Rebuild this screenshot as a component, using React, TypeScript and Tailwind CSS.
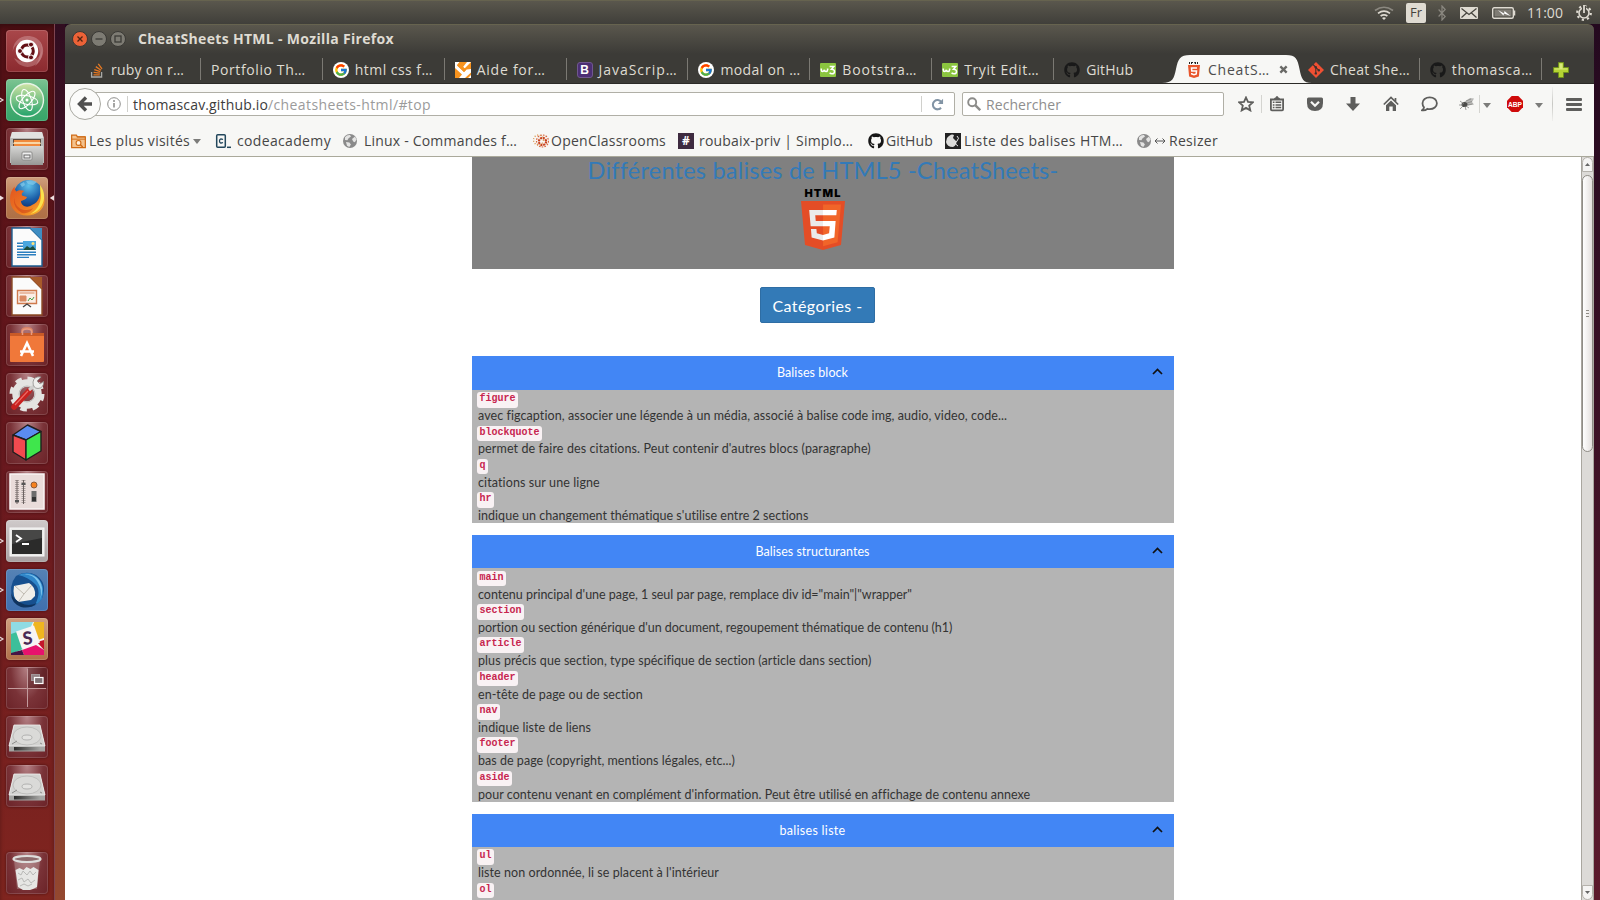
import React, { useLayoutEffect, useRef, useState } from "react";
import { FaGithub, FaUbuntu } from "react-icons/fa";
import { FcGoogle } from "react-icons/fc";

const UI = "font-['Open_Sans','Noto_Sans',sans-serif]";
const PAGE = "font-['Lato',sans-serif]";

/* Text spread by letter spacing over a given width. */
function Fit({ w, children, className = "" }: { w: number; children: string; className?: string }) {
  const ref = useRef<HTMLSpanElement>(null);
  const [ls, setLs] = useState(0);
  useLayoutEffect(() => {
    if (!ref.current) return;
    const natural = ref.current.getBoundingClientRect().width;
    setLs((w - natural) / children.length);
  }, [w, children]);
  return (
    <span ref={ref} className={"inline-block shrink-0 whitespace-pre " + className} style={{ letterSpacing: ls }}>
      {children}
    </span>
  );
}

/* ---------- small icons ---------- */

function Html5({ className = "" }: { className?: string }) {
  return (
    <svg viewBox="30 0 451 512" preserveAspectRatio="none" className={className}>
      <path fill="#e44d26" d="M71 460 30 0h451l-41 460-185 52z" />
      <path fill="#f16529" d="m256 472 149-41 35-394H256z" />
      <path fill="#ebebeb" d="M256 208h-75l-5-58h80V94H114l15 171h127zm0 147-64-17-4-45h-56l7 89 117 32z" />
      <path fill="#fff" d="M255 208v57h70l-7 73-63 17v59l117-32 13-174zm0-114v56h137l5-56z" />
    </svg>
  );
}

function StackOverflow() {
  return (
    <svg viewBox="0 0 16 16" className="size-4" fill="none">
      <path d="M2.600 10v5h10V10" stroke="#a9a9a6" strokeWidth="1.300" />
      <path d="M4.500 12.800h6.300M4.600 10.300l6.300.8M5.300 7.600l6 2M6.800 4.600l5.300 3.600M9.300 1.800l3.700 5" stroke="#e87922" strokeWidth="1.300" />
    </svg>
  );
}

function Google() {
  return (
    <span className="flex size-4 items-center justify-center rounded-full bg-white">
      <FcGoogle size={14} />
    </span>
  );
}

function Zeste() {
  return (
    <svg viewBox="0 0 16 16" className="size-4">
      <path fill="#f7931e" d="M0 0h16v16H0z" />
      <path fill="#fff" d="M0 0h4.500L2 3.500 9 10l2.500-2.500L16 7v3.500L10 16H4l3-3.500L0 6z" />
      <path fill="#fff" d="M13 16h3v-3zM12 0h4L9.500 6.500 8 5z" />
      <path fill="#f7931e" d="m2 3 3-3h4L8 5l3.500 2.500L9 10z" />
    </svg>
  );
}

function BootB() {
  return (
    <span className="flex size-4 items-center justify-center rounded-[3px] border border-[#70578f] bg-[#4c2f74] font-['Liberation_Sans',sans-serif] text-[12px] leading-none font-bold text-white">
      B
    </span>
  );
}

function W3() {
  return (
    <svg viewBox="0 0 16 16" className="size-4">
      <rect y="1" width="16" height="14" rx="1" fill="#8bc53f" />
      <path d="M1.300 6.500v1.200q0 1.800 1.400 1.800t1.700-1.800q.1 1.800 1.600 1.800t1.700-2l-.1-1" fill="none" stroke="#fff" strokeWidth="1.600" />
      <path d="M9.600 4.600h4.200l-2.300 2.700q3-.1 3 2.100 0 2.400-2.500 2.400-1.600 0-2.400-1" fill="none" stroke="#fff" strokeWidth="1.500" />
    </svg>
  );
}

function TabHtml() {
  return (
    <svg viewBox="0 0 16 16" className="size-4">
      <path d="M3 0h1v2H3zM5 0h2v1H6v1H5zM8 0h2v2H9zM11 0h1v2h-1z" fill="#222" />
      <path d="M2 3h12l-1.100 11.500L8 16l-4.900-1.500z" fill="#e8562c" />
      <path d="M11 6H5.500l.3 3h4.700l-.3 3L8 12.800 5.800 12l-.1-1" fill="none" stroke="#fff" strokeWidth="1.500" />
    </svg>
  );
}

function Git() {
  return (
    <svg viewBox="0 0 16 16" className="size-4">
      <path d="m8 0 8 8-8 8-8-8z" fill="#f05033" />
      <path d="M5 2.500 7.800 5.300v6.200M7.800 5.300l2.800 2.800" stroke="#40302c" strokeWidth="1.100" fill="none" />
      <circle cx="7.800" cy="5.300" r="1.200" fill="#40302c" />
      <circle cx="7.800" cy="11.400" r="1.200" fill="#40302c" />
      <circle cx="10.800" cy="8.200" r="1.200" fill="#40302c" />
    </svg>
  );
}

function Globe() {
  return (
    <svg viewBox="0 0 16 16" className="size-4 shrink-0">
      <circle cx="8" cy="8" r="7" fill="#8a8a8a" />
      <path d="M3 4.200Q5 1.700 8 2l1 1.600-2.400 1.700-1.200 2L3 7zM10 6l3-2.400 1.500 3-1.600 2.600-1.700-.7zM4 9l3.400.4 1.500 2L7.300 14 5 12.800z" fill="#e4e4e3" />
    </svg>
  );
}

function Caret() {
  return (
    <svg viewBox="0 0 8 5" className="h-[5px] w-2 shrink-0">
      <path d="M0 0h8L4 5z" fill="#7c7c7a" />
    </svg>
  );
}

/* ---------- top panel ---------- */

function TopPanel() {
  return (
    <header className="flex h-6 w-full shrink-0 items-center justify-end border-t border-[#66634f] bg-linear-to-b from-[#5a574d] to-[#403f3a] pr-2 text-[#dfdbd2]">
      <svg viewBox="0 0 20 14" className="mr-3 h-[14px] w-5" fill="none" strokeWidth="1.700">
        <path d="M1 4.500q9-6.500 18 0" stroke="#8b8880" />
        <path d="M4 7.400q6-4.400 12 0M6.600 10q3.400-2.400 6.800 0" stroke="#dfdbd2" />
        <path d="m8 12 2 2 2-2q-2-1.500-4 0" fill="#dfdbd2" />
      </svg>
      <span className="mr-3 flex h-5 w-5 items-center justify-center rounded-[2px] bg-[#dfdbd2] text-[13px] leading-none text-[#45433d]">
        Fr
      </span>
      <svg viewBox="0 0 8 16" className="mr-[14px] h-4 w-2" fill="none" stroke="#8b8880" strokeWidth="1.200">
        <path d="m.6 4.500 6.600 7L4 15V1l3.200 3.500-6.600 7" />
      </svg>
      <svg viewBox="0 0 18 12" className="mr-[14px] h-3 w-[18px]">
        <rect width="18" height="12" rx="1" fill="#dfdbd2" />
        <path d="m1.500 1.500 7.500 6 7.500-6M1.500 10.500l5-4.500m10 4.500L11.500 6" fill="none" stroke="#45433d" strokeWidth="1.200" />
      </svg>
      <svg viewBox="0 0 24 12" className="mr-[11px] h-3 w-6">
        <rect x=".7" y=".7" width="20.600" height="10.600" rx="1.500" fill="none" stroke="#dfdbd2" strokeWidth="1.400" />
        <rect x="2.500" y="2.500" width="17" height="7" fill="#7f7c74" />
        <path d="m6 3 6 3.500.5-2.500 6 5-6.500-2.500-.5 2z" fill="#fff" />
        <path d="M22.500 3.500v5" stroke="#dfdbd2" strokeWidth="1.500" />
      </svg>
      <Fit w={36} className="mr-[13px] text-[14px]">11:00</Fit>
      <svg viewBox="0 0 16 16" className="size-4">
        <circle cx="8" cy="8" r="6.800" fill="none" stroke="#dfdbd2" strokeWidth="2.200" strokeDasharray="2.200 3.140" />
        <circle cx="8" cy="8" r="5" fill="none" stroke="#dfdbd2" strokeWidth="1.600" />
        <path d="M8 1v7" stroke="#4b4942" strokeWidth="4" />
        <path d="M8 0v8" stroke="#dfdbd2" strokeWidth="1.800" />
      </svg>
    </header>
  );
}

/* ---------- launcher ---------- */

type Tile = { bg: string; icon: React.ReactNode; left?: "open" | "full"; right?: boolean };

const glass = "bg-radial-[at_50%_0%] from-[#b58286] from-0% via-[#7a3338] via-55% to-[#6a2227] to-100%";

const disk = (
  <>
    <path d="M8 9h26l5 21v5H3v-5z" fill="#d9d9d7" />
    <path d="M3 30h36v5.500H3z" fill="#a5a5a3" />
    <path d="M8 31h26v3.500H8z" fill="url(#slot)" />
    <path d="M8 9h26l5 21H3z" fill="#d3d3d1" stroke="#f0f0ef" strokeWidth=".8" />
    <ellipse cx="21" cy="20" rx="14" ry="9" fill="#dadad8" stroke="#bfbfbd" />
    <ellipse cx="21" cy="21.500" rx="5" ry="2.500" fill="#e2e2e0" stroke="#a5a5a3" strokeWidth=".8" />
    <path d="m6 28 5-3M36 28l-2-1" stroke="#8d8d8b" strokeWidth="1" />
  </>
);

const tiles: Tile[] = [
  {
    bg: "bg-linear-to-b from-[#a9474a] to-[#8b2a2f]",
    icon: (
      <>
        <path d="M7 24C5 10 18 2 30 8c10 6 8 22-1 28 12-16-1-27-10-25S6 18 7 24" fill="#c98b8d" opacity=".6" />
        <path d="M8 28c6 12 22 12 28-1 3-8 0-14-4-18 12 16-8 30-24 19" fill="#c98b8d" opacity=".5" />
        <circle cx="21" cy="21" r="11.200" fill="#fff" />
        <FaUbuntu x={10.5} y={10.5} size={21} color="#fff" />
        <circle cx="21.300" cy="21" r="6" fill="none" stroke="#641016" strokeWidth="3" strokeDasharray="10.600 2" strokeDashoffset="5" />
        <g fill="#641016" stroke="#fff">
          <circle cx="14" cy="21" r="2.500" />
          <circle cx="25" cy="14.600" r="2.500" />
          <circle cx="25" cy="27.400" r="2.500" />
        </g>
      </>
    ),
  },
  {
    bg: "bg-linear-to-b from-[#7cc493] via-[#4cae74] to-[#36a569]",
    left: "open",
    icon: (
      <>
        <circle cx="21" cy="21" r="16.500" fill="url(#atom)" stroke="#e6f4e6" strokeWidth="1.400" />
        <g fill="none" stroke="#fff" strokeWidth="1.100">
          <ellipse cx="21" cy="21" rx="11" ry="4.300" transform="rotate(12 21 21)" />
          <ellipse cx="21" cy="21" rx="11" ry="4.300" transform="rotate(72 21 21)" />
          <ellipse cx="21" cy="21" rx="11" ry="4.300" transform="rotate(132 21 21)" />
        </g>
        <circle cx="21" cy="21" r="1.500" fill="#fff" />
      </>
    ),
  },
  {
    bg: glass,
    icon: (
      <>
        <path d="M6 4h30l2 6v25H4V10z" fill="#b9b9b7" />
        <path d="M6 4h30l1.500 6h-33z" fill="#e2e2e0" />
        <path d="M7 11h28v8H7z" fill="#5c4a3d" />
        <path d="M8 12h26v6H8z" fill="#f08a3c" />
        <path d="M8 14h26l1 2H7z" fill="#f9d6a5" />
        <path d="M5 18h32v19H5z" fill="url(#steel)" />
        <rect x="16" y="24" width="10" height="8" rx="1" fill="#eee" stroke="#8a8a88" />
        <rect x="18" y="27" width="6" height="3" fill="none" stroke="#666" />
      </>
    ),
  },
  {
    bg: "bg-linear-to-b from-[#cf9f7d] via-[#ba7a50] to-[#ad6f45]",
    left: "full",
    right: true,
    icon: (
      <>
        <circle cx="22.500" cy="17.500" r="14.500" fill="url(#globe)" />
        <path d="M20 4q6-2 11 1l-4 3-5-1zM14 7l4-2 1 3-3 2z" fill="#8fd3f0" opacity=".6" />
        <path d="M21 38.500C10 38.500 4 31 4 21.500c0-5 2-9 4.500-12 0 3 1 4 2 5 2-1.500 5-1.500 8-.5-2 1-3.500 2.500-2.500 4.500l5 1.500c-1 3-4 3-6 4 0 5 6 7.500 11 4 7-2.500 9-10 8-17 4 6 5 10 4.500 14-1 8-8 13.500-17.500 13.500" fill="url(#fox)" />
        <path d="M34 8c5 6 5.500 15 1.500 21-3 5-7 7-11 8 8-5 11.500-13 10-22-.2-3-.5-5-.5-7" fill="#fbe14b" />
        <path d="M8 21q1 10 10 12 6 0 9-2-3 6-11 5Q7 31 8 21" fill="#c93c17" opacity=".5" />
      </>
    ),
  },
  {
    bg: glass,
    icon: (
      <>
        <path d="M6 2h18l12 12v26H6z" fill="#fbfbfb" stroke="#1c5f92" strokeWidth="1.400" />
        <path d="M24 2h12v12z" fill="#3f8dc2" />
        <path d="M11 16.500h10v1.400H11zm0 3h7v1.400h-7zm0 3h7v1.400h-7zm0 3h19v1.400H11zm0 2.600h19v1.400H11zm0 2.600h12v1.400H11z" fill="#2b7fc0" />
        <path d="M17 15h13v9H17z" fill="#49a6df" />
        <path d="m17 24 4-4 3 2 3-2 3 4z" fill="#1d4e3c" />
        <circle cx="27" cy="17.500" r="1.500" fill="#ffe27a" />
      </>
    ),
  },
  {
    bg: glass,
    icon: (
      <>
        <path d="M6 2h18l12 12v26H6z" fill="#fbfbfb" stroke="#8b4a25" strokeWidth="1.400" />
        <path d="M24 2h12v12z" fill="#a75a2a" />
        <path d="M11.500 15.500h19v13h-19z" fill="#fbeee6" stroke="#cf7a4d" strokeWidth="1.400" />
        <path d="M13.500 18h15M14 21h6v5h-6z" fill="#d98a63" stroke="#d98a63" strokeWidth="1" />
        <path d="m22 26 2-3 2 2 2-3" stroke="#4aa04a" fill="none" />
        <path d="m17 32 4-3 4 3" stroke="#444" fill="none" strokeWidth="1.400" />
      </>
    ),
  },
  {
    bg: glass,
    icon: (
      <>
        <path d="M16 13V7q0-3 5-3t5 3v6" fill="none" stroke="#d98365" strokeWidth="2" />
        <path d="M4 9h34v6H4z" fill="#c95a27" />
        <path d="M4 12h34v25q0 1-1 1H5q-1 0-1-1z" fill="#f0783a" />
        <path d="M16.500 11V7.500q0-2.500 4.500-2.500t4.500 2.500V11" fill="none" stroke="#e89a80" strokeWidth="1.500" />
        <path d="m15 32 6-13 6 13M14 27.500h14" stroke="#fff" strokeWidth="2.600" fill="none" />
      </>
    ),
  },
  {
    bg: glass,
    icon: (
      <>
        <circle cx="21" cy="21" r="11" fill="none" stroke="#e4e4e2" strokeWidth="7.500" />
        <circle cx="21" cy="21" r="15.500" fill="none" stroke="#e4e4e2" strokeWidth="4" strokeDasharray="6.500 5.670" />
        <circle cx="21" cy="21" r="8" fill="none" stroke="#bdbdbb" strokeWidth="1" />
        <path d="M8 34 23 18" stroke="#c8211f" strokeWidth="5.500" strokeLinecap="round" />
        <path d="m9 32 13-14" stroke="#ec6a64" strokeWidth="1.200" />
        <path d="m23 17 6-5" stroke="#cfcfcd" strokeWidth="3" />
        <path d="M27 9q1-6 8-5l-4 4 3 3 3.500-2.500q.5 6.500-5.500 7-5 0-5-6.500" fill="#efefed" stroke="#8f8f8d" strokeWidth=".8" />
      </>
    ),
  },
  {
    bg: glass,
    icon: (
      <g stroke="#1e1e1e" strokeWidth="1.400" strokeLinejoin="round">
        <path d="m7 13 14.500-10L35 9.500 20 18z" fill="#5b8cf0" />
        <path d="m7 13 13 5v20L7 30z" fill="#f24a4f" />
        <path d="m20 18 15-8.500V29l-15 9z" fill="#3fe64c" />
      </g>
    ),
  },
  {
    bg: glass,
    icon: (
      <>
        <rect x="4" y="3" width="34" height="35" fill="#e9dcda" stroke="#f9f4f3" strokeWidth="1.500" />
        <path d="M11 9v24M17.500 9v24" stroke="#aaa09e" strokeWidth="4" strokeDasharray="1 1" />
        <path d="M11 9v24M17.500 9v24" stroke="#6e6463" strokeWidth="1" />
        <path d="M9 29h4v2H9zM15.500 12h4v2h-4z" fill="#555" />
        <circle cx="28" cy="14" r="3" fill="#f58220" stroke="#8b5a3a" />
        <rect x="25.500" y="20" width="5" height="11" fill="#6c6c6c" />
        <path d="M26 26h4v4h-4z" fill="#333" />
      </>
    ),
  },
  {
    bg: "bg-linear-to-b from-[#cfcaca] to-[#a9a2a3]",
    left: "open",
    icon: (
      <>
        <rect x="4" y="8" width="34" height="28" fill="#e9e9e7" stroke="#f8f8f8" />
        <rect x="6" y="10" width="30" height="24" fill="#2b2b2a" />
        <path d="M6 10h30v8L6 24z" fill="#474746" />
        <path d="m10 15 5 3.500-5 3.500M16 24h7" stroke="#fff" strokeWidth="1.800" fill="none" />
      </>
    ),
  },
  {
    bg: "bg-linear-to-b from-[#5582b5] to-[#3f6fae]",
    left: "open",
    icon: (
      <>
        <path d="M10 7Q20 1 30 6q9 6 8 16-1 12-13 16-12 1-18-8Q2 17 10 7" fill="#17508f" />
        <path d="M12 6q12-5 20 3 8 8 4 21-4 5-7 6 7-14 0-21T12 6" fill="#2f86c9" />
        <path d="M14 6q12-2 17 6 6 9 3 19 5-12-1-20T14 6" fill="#7cc4ee" />
        <path d="m8 17 15-3q7 4 6 13l-4 4-13 2q-6-5-4-16" fill="#f0eee9" />
        <path d="m9 17 9 8 8-9M13 32l5-7" stroke="#c0bbb1" fill="none" />
        <path d="M5 24q0 10 10 14 10 2 16-4-9 4-16 0-8-4-10-10" fill="#10345f" />
      </>
    ),
  },
  {
    bg: "bg-linear-to-b from-[#cf9f7f] to-[#b0714a]",
    left: "open",
    icon: (
      <>
        <path d="M5 4h33v33H5z" fill="#f7f4f2" />
        <path d="M5 4h22l-3 7-19 6z" fill="#8fdbe3" />
        <path d="M5 16 11 14l6 17-12 5z" fill="#3cbf9a" />
        <path d="M28 4h10v16l-6 2-5-15z" fill="#efb51f" />
        <path d="m31 24 7-2v10z" fill="#c4162a" />
        <path d="m16 32 14-5 8 5v5H18z" fill="#e7126d" />
        <path d="m5 35 11-3 2 5H5z" fill="#461445" />
        <path d="m10 13.500 18-6 6 17-18 6.500z" fill="#f7f4f2" />
        <text x="21.500" y="26.500" textAnchor="middle" fontSize="18" fontWeight="900" fill="#4a2a55" fontFamily="Lato, sans-serif" transform="rotate(-6 21.500 20)">S</text>
      </>
    ),
  },
  {
    bg: glass,
    icon: (
      <>
        <path d="M22 1h19v20H22z" fill="#4c1519" opacity=".45" />
        <path d="M21.500 2v38M2 21.500h38" stroke="#c39b9d" strokeWidth="1" />
        <rect x="25.500" y="7.500" width="8" height="6" fill="#948487" stroke="#a3979a" />
        <rect x="28.500" y="10.500" width="8.500" height="6" fill="#7f7377" stroke="#fff" strokeWidth="1.200" />
      </>
    ),
  },
  { bg: glass, icon: disk },
  { bg: glass, icon: disk },
];

const trash: Tile = {
  bg: glass,
  icon: (
    <>
      <path d="m8 8 3 29h20l3-29z" fill="#c9b4b4" opacity=".35" />
      <ellipse cx="21" cy="7" rx="13.500" ry="3" fill="#8d6a6c" stroke="#dededc" strokeWidth="2.200" />
      <path d="m9.500 18 4-2 4 2 3-3 4 2 3-2 5 3-1.500 17-4 2-3 1h-7l-5-3z" fill="#e6e6e4" />
      <path d="m12 21 3 2 2-4 4 4 3-4 3 4 3-3M12 28l4-2 2 4 4-3 3 4 4-3M14 34l4-2 4 2 4-2" stroke="#b9b9b7" fill="none" strokeWidth="1" />
    </>
  ),
};

function LauncherTile({ tile }: { tile: Tile }) {
  return (
    <div className="flex h-[42px] items-center">
      <svg viewBox="0 0 6 8" className="h-2 w-[6px] shrink-0">
        {tile.left === "open" && <path d="M-2 1 3 4l-5 3" fill="none" stroke="#e4d4d4" strokeWidth="1.200" />}
        {tile.left === "full" && <path d="M0 1.500 4 4 0 6.500z" fill="#eee0e0" />}
      </svg>
      <div className={"size-[42px] shrink-0 rounded-[4px] shadow-[0_0_3px_rgba(40,0,0,0.6),inset_0_0_0_1px_rgba(255,255,255,0.14)] " + tile.bg}>
        <svg viewBox="0 0 42 42" className="size-[42px]">{tile.icon}</svg>
      </div>
      {tile.right && (
        <svg viewBox="0 0 6 8" className="h-2 w-[6px] shrink-0">
          <path d="M6 1.200 1.800 4 6 6.800z" fill="#eee0e0" />
        </svg>
      )}
    </div>
  );
}

function Launcher() {
  return (
    <aside className="flex w-[65px] shrink-0 bg-linear-to-b from-[#310d20] via-[#60202c] to-[#94482f]">
      <svg className="absolute size-0">
        <defs>
          <linearGradient id="atom" x1="0" y1="0" x2="0" y2="1">
            <stop offset="0" stopColor="#cfe3a4" />
            <stop offset="1" stopColor="#22a26a" />
          </linearGradient>
          <linearGradient id="steel" x1="0" y1="0" x2="0" y2="1">
            <stop offset="0" stopColor="#d6d6d4" />
            <stop offset="1" stopColor="#979795" />
          </linearGradient>
          <linearGradient id="slot" x1="0" y1="0" x2="1" y2="0">
            <stop offset="0" stopColor="#2b2b2a" />
            <stop offset="1" stopColor="#a5a5a3" />
          </linearGradient>
          <radialGradient id="globe" cx=".5" cy=".2" r=".8">
            <stop offset="0" stopColor="#5fc1ea" />
            <stop offset=".6" stopColor="#1b5fa8" />
            <stop offset="1" stopColor="#10316d" />
          </radialGradient>
          <linearGradient id="fox" x1="0" y1="0" x2="1" y2="1">
            <stop offset="0" stopColor="#e2541f" />
            <stop offset=".6" stopColor="#ee7a22" />
            <stop offset="1" stopColor="#fbc52f" />
          </linearGradient>
        </defs>
      </svg>
      <div className="flex w-[55px] flex-col border-r border-[#7e4450] bg-linear-to-b from-[#521015] via-[#6a191f] to-[#80251f] pt-[6px] shadow-[inset_0_3px_4px_rgba(0,0,0,0.3)]">
        <div className="flex flex-col gap-[7px]">
          {tiles.map((t, i) => (
            <LauncherTile key={i} tile={t} />
          ))}
        </div>
        <div className="mt-[45px]">
          <LauncherTile tile={trash} />
        </div>
      </div>
    </aside>
  );
}

/* ---------- browser chrome ---------- */

type Tab = { icon?: React.ReactNode; label: string; w: number; active?: boolean; sep?: boolean };

const tabs: Tab[] = [
  { icon: <StackOverflow />, label: "ruby on r…", w: 73, sep: true },
  { label: "Portfolio Th…", w: 95, sep: true },
  { icon: <Google />, label: "html css f…", w: 78, sep: true },
  { icon: <Zeste />, label: "Aide for…", w: 69, sep: true },
  { icon: <BootB />, label: "JavaScrip…", w: 79, sep: true },
  { icon: <Google />, label: "modal on …", w: 80, sep: true },
  { icon: <W3 />, label: "Bootstra…", w: 75, sep: true },
  { icon: <W3 />, label: "Tryit Edit…", w: 75, sep: true },
  { icon: <FaGithub size={16} color="#191919" />, label: "GitHub", w: 47 },
  { icon: <TabHtml />, label: "CheatS…", w: 62, active: true },
  { icon: <Git />, label: "Cheat She…", w: 80, sep: true },
  { icon: <FaGithub size={16} color="#191919" />, label: "thomasca…", w: 81, sep: true },
];

function TabItem({ tab }: { tab: Tab }) {
  return (
    <div className={"relative flex h-7 w-[121.9px] shrink-0 items-center pl-[10px] " + (tab.active ? "text-[#4c4c4c]" : "text-[#dfdbd2]")}>
      {tab.active && (
        <svg viewBox="0 0 150 28" className="absolute top-0 -left-[14px] h-7 w-[150px]">
          <path d="M0 28C11 28 12 23 14 14 16 4 18 0 28 0h96c10 0 11.500 4 13.500 14S141 28 150 28z" fill="#f7f7f5" />
        </svg>
      )}
      <div className="relative flex flex-1 items-center gap-[6px] pt-px">
        {tab.icon}
        <Fit w={tab.w} className="text-[14px] leading-5">{tab.label}</Fit>
        {tab.active && (
          <svg viewBox="0 0 10 10" className="ml-[3px] size-[9px]">
            <path d="m1.500 1.500 7 7m0-7-7 7" stroke="#696966" strokeWidth="2.600" />
          </svg>
        )}
      </div>
      {tab.sep && <div className="h-[22px] w-px bg-[#7b7973]" />}
    </div>
  );
}

function WindowHead() {
  return (
    <div className="flex h-[60px] flex-col rounded-t-[6px] border-t border-b border-t-[#66634f] border-b-[#2b2a27] bg-linear-to-b from-[#5a574d] from-0% to-[#3c3b37] to-50%">
      <div className="flex h-[27px] items-center gap-[3px] pt-px pl-[7px]">
        <svg viewBox="0 0 16 16" className="size-4">
          <circle cx="8" cy="8" r="7.500" fill="#ec6237" stroke="#3a3935" />
          <path d="m5.500 5.500 5 5m0-5-5 5" stroke="#4e2412" strokeWidth="1.300" />
        </svg>
        <svg viewBox="0 0 16 16" className="size-4">
          <circle cx="8" cy="8" r="7.500" fill="#7d7b73" stroke="#3a3935" />
          <path d="M4.500 8h7" stroke="#3c3b37" strokeWidth="1.300" />
        </svg>
        <svg viewBox="0 0 16 16" className="size-4">
          <circle cx="8" cy="8" r="7.500" fill="#7d7b73" stroke="#3a3935" />
          <rect x="5" y="5" width="6" height="6" fill="none" stroke="#3c3b37" strokeWidth="1.300" />
        </svg>
        <Fit w={256} className="ml-[9px] text-[14px] leading-5 font-bold text-[#dfdbd2]">CheatSheets HTML - Mozilla Firefox</Fit>
      </div>
      <div className="flex h-8 items-start pt-1 pl-[14px]">
        {tabs.map((t, i) => (
          <TabItem key={i} tab={t} />
        ))}
        <svg viewBox="0 0 16 16" className="mt-[7px] ml-[11px] size-4">
          <path d="M5.500.500h5v5h5v5h-5v5h-5v-5h-5v-5h5z" fill="#b5d334" stroke="#6f8f1c" />
          <path d="M6.500 1.500h3v5h5v1h-13v-1h5z" fill="#d8ea7c" />
        </svg>
      </div>
    </div>
  );
}

const stroke = "#5e5e5c";

function NavBar() {
  return (
    <div className="flex h-10 items-center pl-1">
      <div className="relative z-10 -mr-3 flex size-8 shrink-0 items-center justify-center rounded-full border border-[#a9a9a2] bg-[#fbfbfa]">
        <svg viewBox="0 0 16 16" className="size-4">
          <path d="M9 1.500 2.500 8 9 14.500M3 8h12" fill="none" stroke="#505050" strokeWidth="3.400" />
        </svg>
      </div>
      <div className="flex h-6 w-[866px] shrink-0 items-center rounded-r-[2px] border border-[#b0afa6] bg-white pl-[17px]">
        <svg viewBox="0 0 14 14" className="size-[14px]">
          <circle cx="7" cy="7" r="6.300" fill="none" stroke="#8e8e8c" />
          <path d="M7 6v4.500" stroke="#8e8e8c" strokeWidth="1.600" />
          <circle cx="7" cy="3.900" r="1" fill="#8e8e8c" />
        </svg>
        <div className="mr-[5px] ml-[6px] h-4 w-px bg-[#d0d0cc]" />
        <Fit w={135} className="text-[14px] text-[#3c3c3c]">thomascav.github.io</Fit>
        <Fit w={163} className="text-[14px] text-[#9b9b9b]">/cheatsheets-html/#top</Fit>
        <div className="ml-auto h-4 w-px bg-[#d0d0cc]" />
        <svg viewBox="0 0 14 14" className="mr-[10px] ml-[9px] size-[13px]">
          <path d="M10.800 10.500A5 5 0 1 1 11 4.200" fill="none" stroke="#8294a5" strokeWidth="2.200" />
          <path d="M13 .8v5.700H7.300z" fill="#8294a5" />
        </svg>
      </div>
      <div className="ml-[7px] flex h-6 w-[262px] shrink-0 items-center rounded-[2px] border border-[#b0afa6] bg-white pl-1">
        <svg viewBox="0 0 14 14" className="mr-[5px] size-[14px]">
          <circle cx="5.200" cy="5.200" r="4" fill="none" stroke="#8c8c8a" strokeWidth="1.900" />
          <path d="m8.200 8.200 5 5" stroke="#8c8c8a" strokeWidth="2.400" />
        </svg>
        <Fit w={75} className="text-[14px] text-[#8e8e8e]">Rechercher</Fit>
      </div>
      <svg viewBox="0 0 16 16" className="ml-[14px] size-4 shrink-0">
        <path d="m8 1.500 2 4.400 4.800.5-3.600 3.200 1.100 4.800L8 11.900l-4.300 2.500 1.100-4.800L1.200 6.400 6 5.900z" fill="none" stroke={stroke} strokeWidth="1.800" />
      </svg>
      <div className="ml-[7px] h-[18px] w-px shrink-0 bg-[#d4d4d0]" />
      <svg viewBox="0 0 16 16" className="ml-[7px] size-4 shrink-0" fill="none" stroke={stroke}>
        <path d="M1.900 3.500h12.200v9.800q0 1-1 1H2.900q-1 0-1-1z" strokeWidth="1.800" />
        <path d="M5 3q0-1.500 1.500-1.500Q7 0 8 0t1.500 1.500Q11 1.500 11 3z" fill={stroke} stroke="none" />
        <path d="M3.800 6.300h1.700M6.500 6.300h5.700M3.800 8.900h1.700M6.500 8.900h5.700M3.800 11.500h1.700M6.500 11.500h5.700" strokeWidth="1.500" />
      </svg>
      <svg viewBox="0 0 16 16" className="ml-[22px] size-4 shrink-0">
        <path d="M1.500 1.500h13Q16 1.500 16 3v4q0 8-8 8T0 7V3q0-1.500 1.500-1.500" fill={stroke} />
        <path d="m4 5.800 4 4 4-4" fill="none" stroke="#f7f7f5" strokeWidth="2.200" />
      </svg>
      <svg viewBox="0 0 16 16" className="ml-[22px] size-4 shrink-0">
        <path d="M5.500 1h5v6.500H15l-7 7.500-7-7.500h4.500z" fill={stroke} />
      </svg>
      <svg viewBox="0 0 16 16" className="ml-[22px] size-4 shrink-0">
        <path d="m.8 8.500 7.200-7 7.200 7M12.500 2v4" fill="none" stroke={stroke} strokeWidth="1.700" />
        <path d="M8 4.500 13 9.300V15H9.700v-4.500H6.300V15H3V9.300z" fill={stroke} />
      </svg>
      <svg viewBox="0 0 17 16" className="ml-[22px] h-4 w-[17px] shrink-0">
        <path d="M8.700 1.300c4 0 7.200 2.500 7.200 5.900s-3.200 5.900-7.200 5.900q-1.200 0-2.400-.3Q4 15 1 14.300q1.800-1.300 2-3Q1.500 9.600 1.500 7.200c0-3.400 3.200-5.900 7.200-5.900z" fill="none" stroke={stroke} strokeWidth="1.800" />
      </svg>
      <svg viewBox="0 0 16 16" className="ml-[21px] size-4 shrink-0">
        <path d="m5 6 6-4 4 .5-2 3.500 2 2.500-6 1z" fill="#b9b9b7" />
        <path d="m7 5 5-2M8 7l5-1.500M8.500 9l5-1" stroke="#868684" strokeWidth=".8" />
        <ellipse cx="5.500" cy="8.500" rx="3" ry="2.600" fill="#4b4b49" />
        <path d="m1 5 4 3M0 9h4m-3 4 3-3m3 4-1-4m4 2-3-2" stroke="#868684" strokeWidth=".8" />
      </svg>
      <div className="ml-1 h-[18px] w-px shrink-0 bg-[#d4d4d0]" />
      <div className="ml-[3px] flex pt-[3px]"><Caret /></div>
      <div className="ml-[16px] size-4 shrink-0">
        <svg viewBox="0 0 16 16" className="size-4">
          <path d="M4.700 0h6.600L16 4.700v6.600L11.300 16H4.700L0 11.300V4.700z" fill="#cf0a0a" />
          <text x="8" y="10.800" fontSize="7.800" fontWeight="700" textAnchor="middle" fill="#fff" fontFamily="Liberation Sans, sans-serif" textLength="14" lengthAdjust="spacingAndGlyphs">ABP</text>
        </svg>
      </div>
      <div className="ml-[12px] flex pt-[3px]"><Caret /></div>
      <div className="ml-[9px] h-[34px] w-px shrink-0 bg-linear-to-b from-[#f0f0ee] via-[#c8c8c4] to-[#f0f0ee]" />
      <div className="ml-[13px] flex w-4 shrink-0 flex-col gap-[2px]">
        <div className="h-[3px] rounded-[1px] bg-[#5e5e5c]" />
        <div className="h-[3px] rounded-[1px] bg-[#5e5e5c]" />
        <div className="h-[3px] rounded-[1px] bg-[#5e5e5c]" />
      </div>
    </div>
  );
}

function Bookmarks() {
  const t = "text-[14px] leading-5";
  return (
    <div className="flex h-8 items-center pt-[2px] pl-[6px] text-[#464646]">
      <svg viewBox="0 0 16 16" className="size-[15px] shrink-0">
        <path d="M.7 14.500V1.200h5L7 3h8.300v11.500z" fill="#f4c28d" stroke="#cf6a14" strokeWidth="1.300" />
        <path d="M1 5.500h14M6 3h9" stroke="#cf6a14" />
        <circle cx="8" cy="9.500" r="2.600" fill="#fff0dc" stroke="#cf6a14" strokeWidth="1.200" />
        <path d="m10 11.500 2.500 2.300" stroke="#cf6a14" strokeWidth="1.500" />
      </svg>
      <Fit w={101} className={t + " ml-[3px]"}>Les plus visités</Fit>
      <div className="mr-[14px] ml-[3px] flex"><Caret /></div>
      <svg viewBox="0 0 17 16" className="mr-[5px] h-4 w-[17px] shrink-0">
        <rect x="1.700" y="1.700" width="8.600" height="12.600" rx="1" fill="none" stroke="#23475c" strokeWidth="1.500" />
        <path d="M8 6.500q-3.500-1.500-3.500 1.500T8 9.500" fill="none" stroke="#23475c" strokeWidth="1.300" />
        <path d="M12 14.300h4" stroke="#23475c" strokeWidth="1.500" />
      </svg>
      <Fit w={94} className={t}>codeacademy</Fit>
      <div className="mr-[6px] ml-[11px]"><Globe /></div>
      <Fit w={153} className={t}>Linux - Commandes f…</Fit>
      <svg viewBox="0 0 16 16" className="mr-[2px] ml-4 size-4 shrink-0">
        <circle cx="9.500" cy="8.500" r="3.600" fill="none" stroke="#c8421f" strokeWidth="2.200" strokeDasharray="2 .8" />
        <circle cx="9.500" cy="8" r="6" fill="none" stroke="#d9683f" strokeWidth="1.200" strokeDasharray="1.600 1.200" />
        <circle cx="5.500" cy="7" r="5" fill="none" stroke="#dc9c5a" strokeWidth="1.500" strokeDasharray="1 1.700" />
      </svg>
      <Fit w={115} className={t}>OpenClassrooms</Fit>
      <span className="mr-[5px] ml-3 flex size-4 shrink-0 items-center justify-center bg-[#3e2b40] text-[12px] leading-none font-bold text-white">#</span>
      <Fit w={154} className={t}>roubaix-priv | Simplo…</Fit>
      <FaGithub size={16} color="#161616" className="mr-[2px] ml-[15px] shrink-0" />
      <Fit w={47} className={t}>GitHub</Fit>
      <svg viewBox="0 0 16 16" className="mr-[3px] ml-3 size-4 shrink-0">
        <path d="M0 0h16v16H0z" fill="#222" />
        <path d="M2 5q4-5 7-3l-1 3 3 3q1 4-3 6-6 0-7-5z" fill="#dcdcda" />
        <path d="M12 3q3 2 0 5t1 5" fill="none" stroke="#eee" />
      </svg>
      <Fit w={159} className={t}>Liste des balises HTM…</Fit>
      <div className="mr-[2px] ml-[13px]"><Globe /></div>
      <svg viewBox="0 0 12 8" className="mr-[3px] h-2 w-3 shrink-0">
        <path d="M1 4h10M3.500 1.500 1 4l2.500 2.500m5-5L11 4 8.500 6.500" fill="none" stroke="#555" />
      </svg>
      <Fit w={49} className={t}>Resizer</Fit>
    </div>
  );
}

/* ---------- page ---------- */

type Item = { tag: string; text?: string; w?: number };
type Section = { title: string; w: number; items: Item[] };

const sections: Section[] = [
  {
    title: "Balises block",
    w: 71,
    items: [
      { tag: "figure", text: "avec figcaption, associer une légende à un média, associé à balise code img, audio, video, code...", w: 529 },
      { tag: "blockquote", text: "permet de faire des citations. Peut contenir d'autres blocs (paragraphe)", w: 393 },
      { tag: "q", text: "citations sur une ligne", w: 122 },
      { tag: "hr", text: "indique un changement thématique s'utilise entre 2 sections", w: 331 },
    ],
  },
  {
    title: "Balises structurantes",
    w: 114,
    items: [
      { tag: "main", text: "contenu principal d'une page, 1 seul par page, remplace div id=\"main\"|\"wrapper\"", w: 434 },
      { tag: "section", text: "portion ou section générique d'un document, regoupement thématique de contenu (h1)", w: 475 },
      { tag: "article", text: "plus précis que section, type spécifique de section (article dans section)", w: 394 },
      { tag: "header", text: "en-tête de page ou de section", w: 165 },
      { tag: "nav", text: "indique liste de liens", w: 113 },
      { tag: "footer", text: "bas de page (copyright, mentions légales, etc...)", w: 257 },
      { tag: "aside", text: "pour contenu venant en complément d'information. Peut être utilisé en affichage de contenu annexe", w: 552 },
    ],
  },
  {
    title: "balises liste",
    w: 66,
    items: [
      { tag: "ul", text: "liste non ordonnée, li se placent à l'intérieur", w: 241 },
      { tag: "ol" },
    ],
  },
];

function Panel({ s }: { s: Section }) {
  return (
    <section className="mb-3">
      <div className="flex h-[33.33px] items-center bg-[#4286f5] pr-[11px] pl-px">
        <div className="flex flex-1 justify-center pt-px">
          <Fit w={s.w} className="text-[12.5px] leading-4 text-white">{s.title}</Fit>
        </div>
        <svg viewBox="0 0 11 7" className="mb-[2px] h-[7px] w-[11px]">
          <path d="M1 6 5.500 1.500 10 6" fill="none" stroke="#111" strokeWidth="1.700" />
        </svg>
      </div>
      <div className="bg-[#b4b4b4]">
        {s.items.map((it) => (
          <div key={it.tag} className="h-[33.33px] pt-[1.4px] pl-[5px] text-[12.5px] text-[#333]">
            <div className="flex h-[16.66px] items-end">
              <code className="block h-[15.500px] rounded-[3px] bg-[#f9f2f4] px-[2.500px] font-['Liberation_Mono',monospace] text-[10px] leading-[14px] font-bold text-[#c7254e]">
                {it.tag}
              </code>
            </div>
            <div className="flex h-[16.66px] items-center pl-px">
              {it.text && <Fit w={it.w ?? 0} className="leading-4">{it.text}</Fit>}
            </div>
          </div>
        ))}
      </div>
    </section>
  );
}

function Page() {
  return (
    <main className={"flex h-[743px] w-[1516px] justify-center overflow-hidden bg-white " + PAGE}>
      <div className="w-[702px]">
        <div className="flex h-[112px] flex-col items-center bg-[#808080]">
          <Fit w={470} className="text-[23.500px] leading-[27px] text-[#337ab7]">Différentes balises de HTML5 -CheatSheets-</Fit>
          <Fit w={37} className="mt-1 font-['Inter',sans-serif] text-[11px] leading-[10px] font-black text-black">HTML</Fit>
          <Html5 className="mt-[3px] h-[49px] w-[44px]" />
        </div>
        <div className="flex justify-center pt-[18px] pr-[11px]">
          <button className="flex h-9 w-[115px] items-center justify-center rounded-[2px] border border-[#2e6da4] bg-[#337ab7] pt-px text-[16px] text-white">
            <Fit w={90}>Catégories -</Fit>
          </button>
        </div>
        <div className="pt-[33.3px]">
          {sections.map((s) => (
            <Panel key={s.title} s={s} />
          ))}
        </div>
      </div>
    </main>
  );
}

function Scrollbar() {
  return (
    <div className="flex h-[743px] w-[13px] flex-col items-center border-x border-[#a9a69f] bg-[#dcdad7]">
      <div className="flex h-[15px] w-full items-center justify-center rounded-t-[6px] border border-[#b5b2ac] bg-[#f5f4f3]">
        <svg viewBox="0 0 5 3" className="h-[3px] w-[5px]"><path d="M0 3h5L2.500 0z" fill="#666" /></svg>
      </div>
      <div className="mt-[3px] flex h-[277px] w-full shrink-0 flex-col items-center justify-center gap-[2px] rounded-[6px] border border-[#8f8c86] bg-linear-to-r from-white to-[#e4e0de]">
        <div className="h-px w-[3px] bg-[#8f8c86]" />
        <div className="h-px w-[3px] bg-[#8f8c86]" />
        <div className="h-px w-[3px] bg-[#8f8c86]" />
      </div>
      <div className="mt-auto flex h-[15px] w-full items-center justify-center rounded-b-[6px] border border-[#b5b2ac] bg-[#f5f4f3]">
        <svg viewBox="0 0 5 3" className="h-[3px] w-[5px]"><path d="M0 0h5L2.500 3z" fill="#666" /></svg>
      </div>
    </div>
  );
}

export default function App() {
  return (
    <div className={"flex h-[900px] w-[1600px] flex-col overflow-hidden " + UI}>
      <TopPanel />
      <div className="flex h-[876px] bg-linear-to-b from-[#24091f] to-[#5c1a2c]">
        <Launcher />
        <div className="flex w-[1529px] flex-col">
          <WindowHead />
          <div className="h-[73px] border-b border-[#aaa99b] bg-[#f7f7f5]">
            <NavBar />
            <Bookmarks />
          </div>
          <div className="flex bg-white">
            <Page />
            <Scrollbar />
          </div>
        </div>
      </div>
    </div>
  );
}
